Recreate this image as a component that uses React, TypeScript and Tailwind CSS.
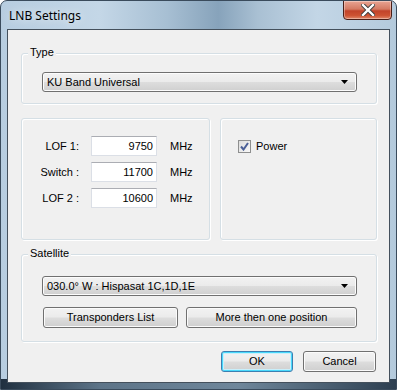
import React from "react";

const font = { fontFamily: '"Liberation Sans", Arial, sans-serif' };

function Arrow() {
  return (
    <svg width="7" height="4" viewBox="0 0 7 4" className="block">
      <polygon points="0,0 7,0 3.5,4" fill="#000" />
    </svg>
  );
}

function Combo({ text }: { text: string }) {
  return (
    <div className="w-[315px] h-[20px] rounded-[3px] border border-[#707070] bg-[linear-gradient(180deg,#f2f2f2_0%,#ebebeb_48%,#dddddd_52%,#cfcfcf_100%)] flex items-center justify-between pl-[4px] pr-[8px] shadow-[inset_0_0_0_1px_#fcfcfc]">
      <span className="text-[11px] leading-[13px] text-black">{text}</span>
      <Arrow />
    </div>
  );
}

function Btn({ text, w, def }: { text: string; w: string; def?: boolean }) {
  return (
    <div
      className={
        "h-[21px] rounded-[3px] border flex items-center justify-center text-[11px] leading-[13px] text-black bg-[linear-gradient(180deg,#f2f2f2_0%,#ebebeb_48%,#dddddd_52%,#cfcfcf_100%)] " +
        w +
        (def
          ? " border-[#3c7fb1] shadow-[inset_0_0_0_1px_#48d8fb,inset_0_0_0_2px_#c9effb]"
          : " border-[#707070] shadow-[inset_0_0_0_1px_#fbfbfb]")
      }
    >
      {text}
    </div>
  );
}

function Group({
  label,
  className,
  children,
}: {
  label?: string;
  className: string;
  children?: React.ReactNode;
}) {
  return (
    <div className={"relative rounded-[3px] border border-[#d5dfe5] shadow-[inset_1px_1px_0_#ffffff,1px_1px_0_#ffffff] " + className}>
      {label && (
        <span className="absolute left-[6px] top-[-8px] px-[2px] bg-[#f0f0f0] text-[11px] leading-[13px] text-black">
          {label}
        </span>
      )}
      {children}
    </div>
  );
}

function Field({ label, value }: { label: string; value: string }) {
  return (
    <div className="flex items-center h-[20px]">
      <span className="w-[57px] text-right text-[11px] leading-[13px] text-black">{label}</span>
      <div className="ml-[12px] w-[66px] h-[20px] bg-white border border-[#dbdfe6] border-t-[#abadb3] flex items-center justify-end pr-[3px] text-[11px] leading-[13px] text-black">
        {value}
      </div>
      <span className="ml-[13px] text-[11px] leading-[13px] text-black">MHz</span>
    </div>
  );
}

export default function App() {
  return (
    <div style={font} className="w-[397px] h-[390px] bg-white">
      <div className="relative w-[397px] h-[390px] rounded-t-[7px] border border-[#3a4b5c] overflow-hidden bg-[linear-gradient(90deg,#b7cde0_0%,#c4d7e7_25%,#a7bfd3_42%,#87a3bb_55%,#a9c0d3_65%,#c3d6e6_80%,#b4cadc_100%)]">
        <div className="absolute inset-x-0 bottom-0 h-[10px] bg-[linear-gradient(90deg,#203040_0%,#5d7488_25%,#6f879b_60%,#2d3f50_100%)]" />
        {/* title bar */}
        <div className="relative h-[28px] flex items-center pl-[8px]">
          <span
            style={{ fontFamily: '"Noto Sans", "Open Sans", sans-serif', textShadow: "0 0 8px rgba(255,255,255,0.9)" }}
            className="text-[12px] leading-[14px] text-black mt-[1px]"
          >
            LNB Settings
          </span>
          <div className="absolute right-[4px] top-[-1px] w-[49px] h-[20px] rounded-b-[4px] border border-[#4a1f18] bg-[linear-gradient(180deg,#e8a493_0%,#d47a63_45%,#c2432a_55%,#cd5232_80%,#e0886a_100%)] flex items-center justify-center shadow-[inset_0_0_0_1px_rgba(255,255,255,0.35)]">
            <svg width="14" height="12" viewBox="0 0 14 12">
              <path d="M2 1 L12 11 M12 1 L2 11" stroke="#3c3c3c" strokeWidth="4.2" strokeLinecap="square" />
              <path d="M2 1 L12 11 M12 1 L2 11" stroke="#ffffff" strokeWidth="2.4" strokeLinecap="square" />
            </svg>
          </div>
        </div>
        {/* client */}
        <div className="relative ml-[6px] w-[383px] h-[354px] border border-[#44505c] bg-[#f0f0f0] pl-[13px] pt-[23px]">
          <Group label="Type" className="w-[356px] h-[51px] pl-[20px] pt-[18px]">
            <Combo text="KU Band Universal" />
          </Group>
          <div className="mt-[14px] flex gap-[10px]">
            <Group className="w-[189px] h-[122px] pt-[17px] flex flex-col gap-[6px]">
              <Field label="LOF 1:" value="9750" />
              <Field label="Switch :" value="11700" />
              <Field label="LOF 2 :" value="10600" />
            </Group>
            <Group className="w-[157px] h-[122px] pl-[17px] pt-[21px]">
              <div className="flex items-center">
                <div className="w-[13px] h-[13px] border border-[#8e8f8f] bg-[linear-gradient(135deg,#dcdcdc_0%,#f8f8f8_100%)] flex items-center justify-center">
                  <svg width="9" height="9" viewBox="0 0 9 9">
                    <path d="M1 4.5 L3.5 7.5 L8 1" stroke="#4a5f97" strokeWidth="2" fill="none" />
                  </svg>
                </div>
                <span className="ml-[5px] text-[11px] leading-[13px] text-black">Power</span>
              </div>
            </Group>
          </div>
          <Group label="Satellite" className="mt-[14px] w-[356px] h-[88px] pl-[20px] pt-[21px]">
            <Combo text="030.0° W : Hispasat 1C,1D,1E" />
            <div className="mt-[11px] ml-[1px] flex gap-[8px]">
              <Btn text="Transponders List" w="w-[135px]" />
              <Btn text="More then one position" w="w-[171px]" />
            </div>
          </Group>
          <div className="mt-[9px] w-[355px] flex justify-end gap-[10px]">
            <Btn text="OK" w="w-[72px]" def />
            <Btn text="Cancel" w="w-[73px]" />
          </div>
        </div>
      </div>
    </div>
  );
}
